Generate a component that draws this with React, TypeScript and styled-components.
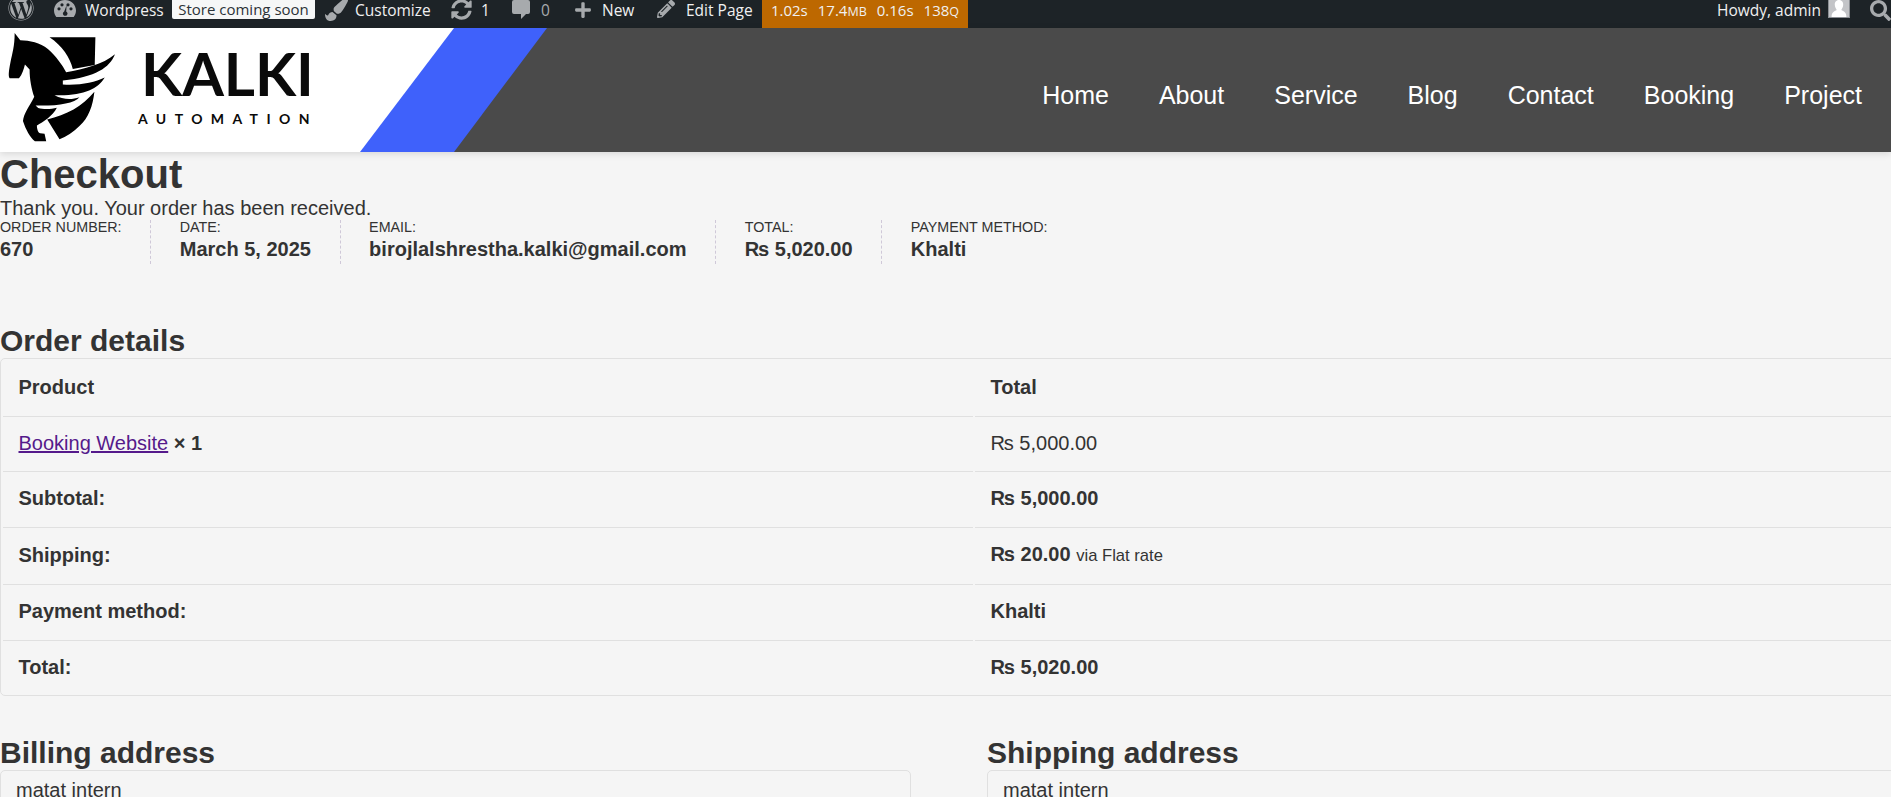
import React from "react";
import styled, { createGlobalStyle } from "styled-components";
import { FaWordpress, FaPaintBrush, FaSyncAlt, FaPlus, FaPencilAlt, FaSearch } from "react-icons/fa";

const Global = createGlobalStyle`
  html, body { margin: 0; padding: 0; height: 797px; overflow: hidden; background: #f5f5f5; }
  body { font-family: "Liberation Sans", Arial, sans-serif; font-size: 20px; color: #333; }
  #root { width: 1891px; height: 797px; overflow: hidden; }
`;

const AdminBar = styled.div`
  height: 28px;
  background: #1d2327;
  display: flex;
  justify-content: space-between;
  font-family: "Open Sans", sans-serif;
  font-size: 15.5px;
  line-height: 20px;
  color: #f0f0f1;
  overflow: hidden;
`;
const AdminGroup = styled.div`
  display: flex;
  align-items: flex-start;
`;
const AdminItem = styled.span<{ $left: number; $width: number; $dim?: boolean }>`
  margin-left: ${(p) => p.$left}px;
  width: ${(p) => p.$width}px;
  flex: none;
  color: ${(p) => (p.$dim ? "#a7aaad" : "inherit")};
  white-space: nowrap;
`;
const AdminIcon = styled.span<{ $left: number; $top?: number }>`
  margin-left: ${(p) => p.$left}px;
  margin-top: ${(p) => p.$top ?? 0}px;
  display: flex;
  flex: none;
  color: #a7aaad;
`;
const StoreBadge = styled.span`
  margin-left: 10px;
  width: 143px;
  height: 19px;
  background: #f6f7f7;
  color: #2c3338;
  border-radius: 0 0 2px 2px;
  text-align: center;
  line-height: 18px;
  white-space: nowrap;
  font-size: 15px;
`;
const PerfBar = styled.div`
  margin-left: 10px;
  width: 206px;
  height: 28px;
  background: #bd6800;
  font-size: 15px;
  display: flex;
  justify-content: center;
  gap: 10px;
`;
const Small = styled.span`
  font-size: 12.5px;
`;

const Header = styled.header`
  height: 124px;
  background: #4a4a4a;
  display: flex;
  justify-content: space-between;
  box-shadow: 0 2px 7px rgba(0, 0, 0, 0.12);
`;
const BlueBand = styled.div`
  width: 547px;
  background: #3f61fb;
  clip-path: polygon(0 0, 547px 0, 454px 100%, 0 100%);
`;
const Plate = styled.div`
  height: 100%;
  background: #fff;
  clip-path: polygon(0 0, 454px 0, 360px 100%, 0 100%);
  display: flex;
  align-items: flex-start;
`;
const HorseSvg = styled.svg`
  width: 108px;
  height: 111px;
  margin: 4px 0 0 8px;
  flex: none;
`;
const Wordmark = styled.div`
  margin: 15px 0 0 22px;
  width: 172px;
  color: #0a0a0a;
  font-family: Lato, sans-serif;
  font-weight: 700;
`;
const WordTop = styled.div`
  font-size: 60px;
  line-height: 60px;
  margin-left: 3px;
`;
const WordBottom = styled.div`
  font-size: 14px;
  line-height: 16px;
  letter-spacing: 8.4px;
  margin-top: 8px;
  white-space: nowrap;
`;
const Nav = styled.nav`
  display: flex;
  gap: 50px;
  padding: 52px 29px 0 0;
  font-size: 25px;
  line-height: 30px;
  color: #fff;
`;

const Main = styled.main`
  width: 1898px;
`;
const Title = styled.h1`
  margin: 0;
  font-size: 40px;
  line-height: 45px;
  font-weight: 700;
`;
const Notice = styled.p`
  margin: 0;
  line-height: 23px;
`;
const Overview = styled.ul`
  list-style: none;
  margin: 0 0 59px;
  padding: 0;
  display: flex;
`;
const OverviewItem = styled.li`
  font-size: 14.3px;
  line-height: 1;
  text-transform: uppercase;
  margin-right: 28.6px;
  padding-right: 28.6px;
  border-right: 1px dashed #cfc8d8;
  &:last-child {
    border-right: 0;
  }
`;
const OverviewValue = styled.strong`
  display: block;
  font-size: 20px;
  line-height: 30px;
  text-transform: none;
`;
const SectionTitle = styled.h2`
  margin: 0;
  font-size: 30px;
  line-height: 35px;
  font-weight: 700;
`;
const OrderTable = styled.table`
  width: 1899px;
  table-layout: fixed;
  border: 1px solid #e0e0e0;
  border-radius: 5px;
  margin-bottom: 39px;
`;
const HeadCell = styled.th`
  padding: 10.75px 16px 11.75px 15.5px;
  line-height: 30px;
  text-align: left;
  font-weight: 700;
`;
const Cell = styled.td`
  padding: 10.75px 16px 11.75px 15.5px;
  line-height: 30px;
  border-top: 1px solid #e0e0e0;
`;
const RowHead = styled.th`
  padding: 10.75px 16px 11.75px 15.5px;
  line-height: 30px;
  text-align: left;
  font-weight: 700;
  border-top: 1px solid #e0e0e0;
`;
const VisitedLink = styled.a`
  color: #551a8b;
  text-decoration: underline;
`;
const Via = styled.small`
  font-size: 16.6px;
`;
const Columns = styled.div`
  display: grid;
  grid-template-columns: 911px 911px;
  column-gap: 76px;
`;
const AddressBox = styled.address`
  font-style: normal;
  border: 1px solid #e0e0e0;
  border-radius: 5px;
  padding: 4px 15px;
  line-height: 30px;
  height: 120px;
`;

const nav = ["Home", "About", "Service", "Blog", "Contact", "Booking", "Project"];
const overview = [
  ["Order number:", "670"],
  ["Date:", "March 5, 2025"],
  ["Email:", "birojlalshrestha.kalki@gmail.com"],
  ["Total:", "₨ 5,020.00"],
  ["Payment method:", "Khalti"],
];
const totals = [
  ["Subtotal:", "₨ 5,000.00"],
  ["Shipping:", "₨ 20.00"],
  ["Payment method:", "Khalti"],
  ["Total:", "₨ 5,020.00"],
];

const Gauge = () => (
  <svg width="22" height="17" viewBox="0 0 22 17">
    <path
      fill="currentColor"
      fillRule="evenodd"
      d="M11 0C5 0 0 4.6 0 10.6c0 2.5 .9 4.7 2.3 6.4h17.4c1.4-1.700 2.300-3.900 2.300-6.400C22 4.600 17 0 11 0zM5 7.200a1.600 1.600 0 1 1 0 3.200 1.600 1.600 0 0 1 0-3.200zM8 3.200a1.600 1.600 0 1 1 0 3.200 1.600 1.600 0 0 1 0-3.200zM14 3.200a1.600 1.600 0 1 1 0 3.200 1.600 1.600 0 0 1 0-3.200zM17 7.200a1.600 1.600 0 1 1 0 3.200 1.600 1.600 0 0 1 0-3.200zM12.600 5.200l-.4 6.200a2.300 2.300 0 1 1-2 0z"
    />
  </svg>
);

const Bubble = () => (
  <svg width="18" height="19" viewBox="0 0 18 19">
    <path
      fill="currentColor"
      d="M2 0h14a2 2 0 0 1 2 2v10a2 2 0 0 1-2 2h-2l-5 5v-5H2a2 2 0 0 1-2-2V2a2 2 0 0 1 2-2z"
    />
  </svg>
);

const Avatar = () => (
  <svg width="22" height="18" viewBox="0 0 22 18">
    <rect width="22" height="18" fill="#8c8f94" />
    <rect x="1" width="20" height="17" fill="#c3c4c7" />
    <path fill="#fff" d="M11 0c3 0 4.400 2.400 4.200 5-.2 2.400-1.400 4-2 5 2.600 1.200 5.200 2.200 5.200 7H3.600c0-4.800 2.600-5.800 5.200-7-.6-1-1.800-2.600-2-5C6.600 2.400 8 0 11 0z" />
  </svg>
);

const Horse = () => (
  <HorseSvg viewBox="25 18 325 332">
    <path
      fill="#000"
      d="M45 20L62 42C90 42 122 50 145 68C170 90 190 118 200 138C255 128 310 115 347 84C330 125 290 152 190 163L190 175C240 178 285 170 316 154C295 190 250 210 165 207C190 220 215 222 240 213C225 232 170 240 108 238L116 246C130 250 155 250 172 245C160 270 130 288 112 298C112 310 116 320 122 322L135 323L140 346L106 346C92 335 78 310 70 285C72 262 90 240 104 212C96 190 90 160 90 130L76 115C72 130 68 145 58 156L30 156C25 150 28 130 32 110C38 80 45 60 45 20Z"
    />
    <path fill="#000" d="M150 33L288 33L286 116L220 128C212 95 188 58 150 33Z" />
    <path fill="#000" d="M285 197C280 240 268 275 240 300C222 318 200 332 180 340L143 280C200 268 250 240 285 197Z" />
  </HorseSvg>
);

export default function App() {
  return (
    <>
      <Global />
      <AdminBar>
        <AdminGroup>
          <AdminIcon $left={8} $top={-5}><FaWordpress size={26} /></AdminIcon>
          <AdminIcon $left={20}><Gauge /></AdminIcon>
          <AdminItem $left={9} $width={77}>Wordpress</AdminItem>
          <StoreBadge>Store coming soon</StoreBadge>
          <AdminIcon $left={10} $top={-2}><FaPaintBrush size={23} /></AdminIcon>
          <AdminItem $left={7} $width={75}>Customize</AdminItem>
          <AdminIcon $left={21} $top={-1}><FaSyncAlt size={21} /></AdminIcon>
          <AdminItem $left={9} $width={9}>1</AdminItem>
          <AdminIcon $left={22}><Bubble /></AdminIcon>
          <AdminItem $left={11} $width={8} $dim>0</AdminItem>
          <AdminIcon $left={25} $top={1}><FaPlus size={18} /></AdminIcon>
          <AdminItem $left={10} $width={33}>New</AdminItem>
          <AdminIcon $left={22}><FaPencilAlt size={18} /></AdminIcon>
          <AdminItem $left={11} $width={66}>Edit Page</AdminItem>
          <PerfBar>
            <span>1.02s</span>
            <span>17.4<Small>MB</Small></span>
            <span>0.16s</span>
            <span>138<Small>Q</Small></span>
          </PerfBar>
        </AdminGroup>
        <AdminGroup>
          <AdminItem $left={0} $width={103}>Howdy, admin</AdminItem>
          <AdminIcon $left={8}><Avatar /></AdminIcon>
          <AdminIcon $left={20}><FaSearch size={21} /></AdminIcon>
        </AdminGroup>
      </AdminBar>
      <Header>
        <BlueBand>
          <Plate>
            <Horse />
            <Wordmark>
              <WordTop>KALKI</WordTop>
              <WordBottom>AUTOMATION</WordBottom>
            </Wordmark>
          </Plate>
        </BlueBand>
        <Nav>
          {nav.map((n) => <span key={n}>{n}</span>)}
        </Nav>
      </Header>
      <Main>
        <Title>Checkout</Title>
        <Notice>Thank you. Your order has been received.</Notice>
        <Overview>
          {overview.map(([k, v]) => (
            <OverviewItem key={k}>
              {k}
              <OverviewValue>{v}</OverviewValue>
            </OverviewItem>
          ))}
        </Overview>
        <SectionTitle>Order details</SectionTitle>
        <OrderTable>
          <colgroup>
            <col width="970" />
            <col />
          </colgroup>
          <thead>
            <tr>
              <HeadCell>Product</HeadCell>
              <HeadCell>Total</HeadCell>
            </tr>
          </thead>
          <tbody>
            <tr>
              <Cell>
                <VisitedLink href="#">Booking Website</VisitedLink> <strong>× 1</strong>
              </Cell>
              <Cell>₨ 5,000.00</Cell>
            </tr>
          </tbody>
          <tfoot>
            {totals.map(([k, v]) => (
              <tr key={k}>
                <RowHead>{k}</RowHead>
                <Cell>
                  <strong>{v}</strong>
                  {k === "Shipping:" && <> <Via>via Flat rate</Via></>}
                </Cell>
              </tr>
            ))}
          </tfoot>
        </OrderTable>
        <Columns>
          <section>
            <SectionTitle>Billing address</SectionTitle>
            <AddressBox>matat intern</AddressBox>
          </section>
          <section>
            <SectionTitle>Shipping address</SectionTitle>
            <AddressBox>matat intern</AddressBox>
          </section>
        </Columns>
      </Main>
    </>
  );
}
